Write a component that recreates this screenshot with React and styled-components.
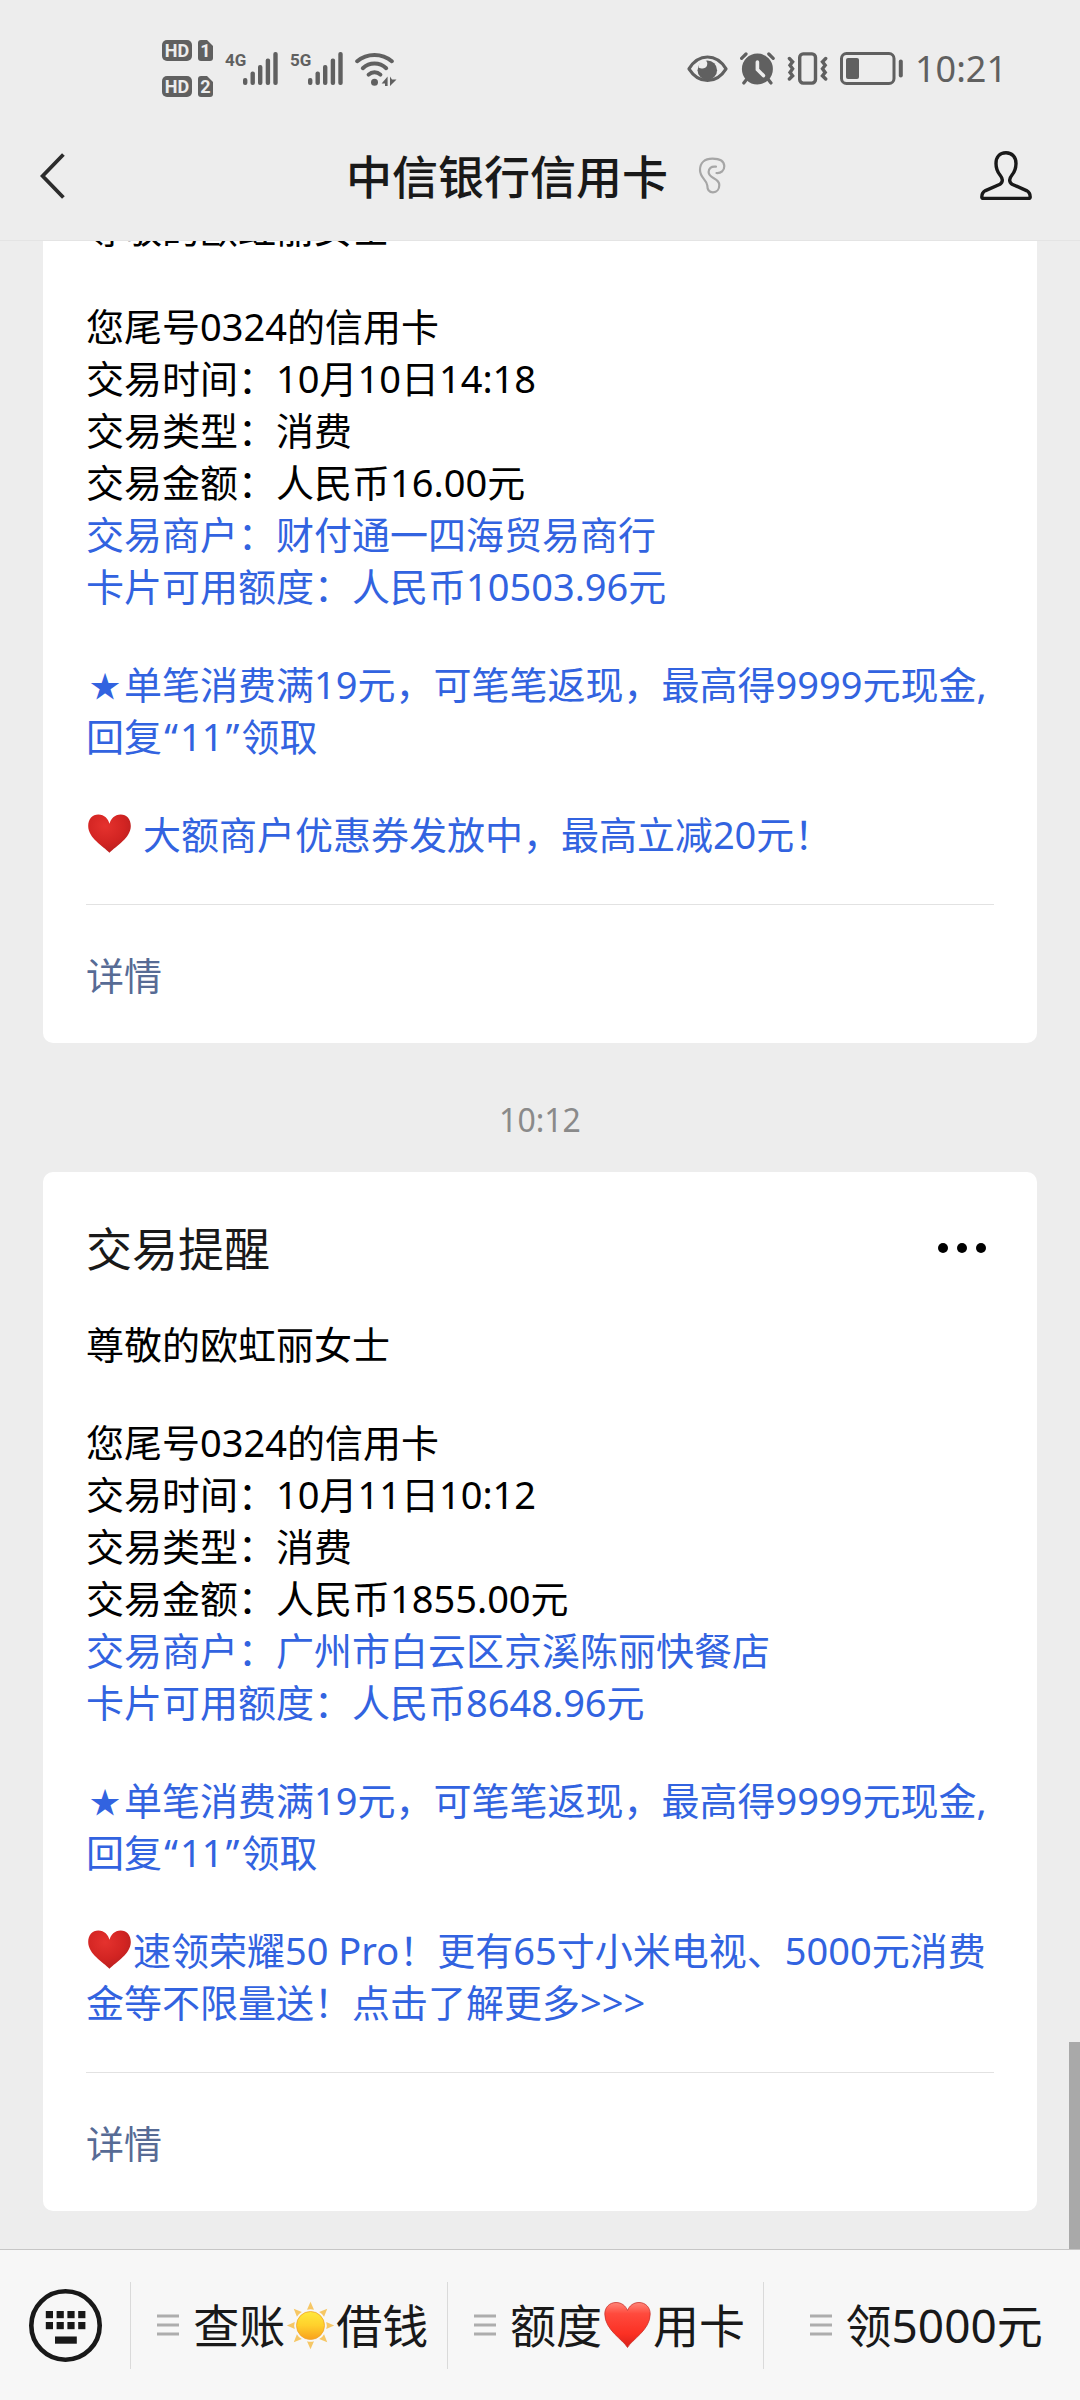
import React from "react";
import styled, { createGlobalStyle } from "styled-components";

const messages = [
  {
    id: 1,
    title: "交易提醒",
    greeting: "尊敬的欧虹丽女士",
    rows: [
      { text: "您尾号0324的信用卡" },
      { text: "交易时间：10月10日14:18" },
      { text: "交易类型：消费" },
      { text: "交易金额：人民币16.00元" },
      { text: "交易商户：财付通一四海贸易商行", blue: true },
      { text: "卡片可用额度：人民币10503.96元", blue: true },
    ],
    promo: " 大额商户优惠券发放中，最高立减20元！",
  },
  {
    id: 2,
    time: "10:12",
    title: "交易提醒",
    greeting: "尊敬的欧虹丽女士",
    rows: [
      { text: "您尾号0324的信用卡" },
      { text: "交易时间：10月11日10:12" },
      { text: "交易类型：消费" },
      { text: "交易金额：人民币1855.00元" },
      { text: "交易商户：广州市白云区京溪陈丽快餐店", blue: true },
      { text: "卡片可用额度：人民币8648.96元", blue: true },
    ],
    promo: "速领荣耀50 Pro！更有65寸小米电视、5000元消费金等不限量送！点击了解更多>>>",
  },
];

const bars = [
  { x: 0, y: 26 },
  { x: 7.5, y: 19.5 },
  { x: 15, y: 13 },
  { x: 22.7, y: 6.5 },
  { x: 30.3, y: 0 },
];

const Signal = ({ label }) => (
  <SignalBox>
    <SignalLabel>{label}</SignalLabel>
    <svg width="35" height="33" viewBox="0 0 35 33" fill="#606060">
      {bars.map((bar) => (
        <rect key={bar.x} x={bar.x} y={bar.y} width="4.4" height={33 - bar.y} rx="2" />
      ))}
    </svg>
  </SignalBox>
);

const WifiIcon = () => (
  <svg width="42" height="34" viewBox="0 0 42 34" fill="none" stroke="#606060" strokeWidth="4" strokeLinecap="round">
    <path d="M2.2 9.2C12 .8 27 .8 36.8 9.2" />
    <path d="M7.8 16.2C14.5 10 24.5 10 31.2 16.2" />
    <path d="M13.6 22.6C17 19.4 22 19.4 25.4 22.6" />
    <circle cx="19.5" cy="30.2" r="3.5" fill="#606060" stroke="none" />
    <path d="M26.6 31.5L32.6 24.5V34H30V31.5ZM35 34V24.5L37 27.4H41.5L38 31Z" fill="#606060" stroke="none" />
  </svg>
);

const EyeIcon = () => (
  <svg width="41" height="28" viewBox="0 0 42 28" fill="none">
    <path d="M2 13.8C12-2.3 30-2.3 40 13.8C30 29.7 12 29.7 2 13.8Z" stroke="#606060" strokeWidth="3.2" strokeLinejoin="round" />
    <circle cx="20.8" cy="15.2" r="10" fill="#606060" />
    <path d="M12 12.5C14.5 14 19 14.5 20.5 10.5C21.3 8 20.5 6 18.5 4.6C14 5.4 11.8 8.5 12 12.5Z" fill="#ededed" />
  </svg>
);

const AlarmIcon = () => (
  <svg width="35" height="33" viewBox="0 0 35 33" fill="none" stroke="#606060" strokeWidth="3.2" strokeLinecap="round">
    <circle cx="17.4" cy="17" r="15.5" fill="#606060" stroke="none" />
    <path d="M0 10.5L9.5 1M34.8 10.5L25.3 1" stroke="#ededed" strokeWidth="2.4" />
    <path d="M1.6 6.4L6 2M33.2 6.4L28.8 2M6.5 27.5L3.8 31M28.3 27.5L31 31" />
    <path d="M17.4 10V17.5L23.4 23.6" stroke="#ededed" strokeWidth="3.6" />
  </svg>
);

const VibrateIcon = () => (
  <svg width="41" height="33" viewBox="0 0 41 33" fill="none" stroke="#606060" strokeWidth="3.4" strokeLinecap="round">
    <rect x="12.7" y="1.9" width="15.8" height="29.2" rx="3.5" />
    <path d="M2.4 6.5L5.6 9.8L3 13.2L5.6 16.8L3 20.4L5.6 23.8L2.4 27" />
    <path d="M38.7 6.5L35.5 9.8L38.2 13.2L35.5 16.8L38.2 20.4L35.5 23.8L38.7 27" />
  </svg>
);

const BatteryIcon = () => (
  <svg width="63" height="33" viewBox="0 0 63 33" fill="#606060">
    <rect x="1.5" y="1.5" width="52.5" height="30" rx="5" fill="none" stroke="#606060" strokeWidth="3" />
    <rect x="6" y="6" width="13" height="21" rx="2" />
    <rect x="58.8" y="7.5" width="4" height="18" rx="2" />
  </svg>
);

const BackIcon = () => (
  <svg width="26" height="46" viewBox="0 0 26 46" fill="none" stroke="#2c2c2c" strokeWidth="3.8">
    <path d="M23.4 1.5L2.6 23L23.4 44.5" />
  </svg>
);

const EarIcon = () => (
  <svg width="42" height="42" viewBox="0 0 42 42" fill="none" stroke="#a6a6a6" strokeWidth="2.2" strokeLinecap="round">
    <path d="M24.5 18C29 18.4 32.4 15.5 32.3 11C32 6.5 28 3.7 20.5 3.7C12.5 3.7 8 8 8 15C8 23 15 25 15.3 30.5C15.3 35 17.5 37.3 21 37.3C25 37.3 27.3 34 27.3 30C27.3 22.5 16.6 24 16.6 17C16.6 13.5 19 11 24 11.7" />
  </svg>
);

const UserIcon = () => (
  <svg width="52" height="50" viewBox="0 0 52 50" fill="none" stroke="#191919" strokeWidth="3.4" strokeLinejoin="round">
    <path d="M26 1.8C19.5 1.8 16 6.5 16 12.5C16 17 17.5 21 20 24C22.6 27.2 23.5 31 20 33.2L5.5 39.6C2.4 41.2 1.8 43.4 1.8 46Q1.8 47.4 3.4 47.4H48.6Q50.2 47.4 50.2 46C50.2 43.4 49.6 41.2 46.5 39.6L32 33.2C28.5 31 29.4 27.2 32 24C34.5 21 36 17 36 12.5C36 6.5 32.5 1.8 26 1.8Z" />
  </svg>
);

const KeyboardIcon = () => (
  <svg width="73" height="73" viewBox="0 0 73 73" fill="#191919">
    <circle cx="36.5" cy="36.5" r="34.2" fill="none" stroke="#191919" strokeWidth="4.6" />
    {[22, 33].map((y) =>
      [16.8, 27.6, 38.4, 49.2].map((x) => <rect key={`${x}-${y}`} x={x} y={y} width="7.2" height="7.2" />)
    )}
    <rect x="26" y="47.5" width="21.8" height="7.2" />
  </svg>
);

const MenuIcon = () => (
  <svg width="22" height="22" viewBox="0 0 22 22" fill="#adadad">
    <rect y="0.5" width="22" height="3" />
    <rect y="9.5" width="22" height="3" />
    <rect y="18.5" width="22" height="3" />
  </svg>
);

const SunIcon = () => (
  <svg width="51" height="51" viewBox="0 0 51 51">
    <defs>
      <linearGradient id="sun" x1="0" y1="0" x2="0" y2="1">
        <stop offset="0" stopColor="#ffe93b" />
        <stop offset="0.5" stopColor="#ffd02c" />
        <stop offset="1" stopColor="#f9a11c" />
      </linearGradient>
    </defs>
    {[0, 45, 90, 135, 180, 225, 270, 315].map((deg) => (
      <path key={deg} d="M25.5 1.8L29 9.8Q25.5 8.6 22 9.8Z" fill="#f6c765" transform={`rotate(${deg} 25.5 25.5)`} />
    ))}
    <circle cx="25.5" cy="25.5" r="14" fill="url(#sun)" stroke="#f0a52c" strokeWidth="0.8" />
  </svg>
);

const HeartIcon = () => (
  <svg width="51" height="48" viewBox="0 0 51 48">
    <defs>
      <linearGradient id="heart" x1="0" y1="0" x2="0" y2="1">
        <stop offset="0" stopColor="#ff8578" />
        <stop offset="0.25" stopColor="#ff4a3d" />
        <stop offset="0.7" stopColor="#fb3023" />
        <stop offset="1" stopColor="#d9201a" />
      </linearGradient>
    </defs>
    <path
      d="M25.5 46.5C21 38.5 2.8 29 2.8 13C2.8 6 7.8 1.5 14 1.5C19.5 1.5 23.5 4.6 25.5 9.5C27.5 4.6 31.5 1.5 37 1.5C43.2 1.5 48.2 6 48.2 13C48.2 29 30 38.5 25.5 46.5Z"
      fill="url(#heart)"
      stroke="#c9322b"
      strokeWidth="0.8"
    />
  </svg>
);

const CardHeart = () => (
  <InlineHeart width="47" height="39" viewBox="0 0 47 39">
    <defs>
      <radialGradient id="cardHeart" cx="0.4" cy="0.3" r="0.75">
        <stop offset="0" stopColor="#e5322e" />
        <stop offset="0.6" stopColor="#d22422" />
        <stop offset="1" stopColor="#b51f1f" />
      </radialGradient>
    </defs>
    <path
      d="M23.5 38.8C17 32 2.2 24 2.2 12C2.2 5 6.5 .6 12.3 .6C18.5 .6 22.2 5 23.5 9.8C24.8 5 28.5 .6 34.7 .6C40.5 .6 44.8 5 44.8 12C44.8 24 30 32 23.5 38.8Z"
      fill="url(#cardHeart)"
    />
  </InlineHeart>
);

const MessageCard = ({ message }) => {
  return (
    <Card>
      <CardHead>
        <CardTitle>{message.title}</CardTitle>
        <MoreBtn aria-label="更多">
          <Dot />
          <Dot />
          <Dot />
        </MoreBtn>
      </CardHead>
      <Detail>
        <p>{message.greeting}</p>
        <div>
          {message.rows.map((row) => (
            <Row key={row.text} $blue={row.blue}>{row.text}</Row>
          ))}
        </div>
        <Row $blue>
          <Star>★</Star>单笔消费满19元，可笔笔返现，最高得9999元现金,回复<Quote>“</Quote>11<Quote>”</Quote>领取
        </Row>
        <Row $blue>
          <CardHeart />
          {message.promo}
        </Row>
      </Detail>
      <CardFoot>
        <DetailLink href="#detail">详情</DetailLink>
      </CardFoot>
    </Card>
  );
};

const App = () => {
  return (
    <Phone lang="zh-CN">
      <GlobalStyle />
      <Header>
        <StatusBar>
          <StatusGroup>
            <SimList>
              {["1", "2"].map((num) => (
                <SimRow key={num}>
                  <HdBadge>HD</HdBadge>
                  <SimBadge>{num}</SimBadge>
                </SimRow>
              ))}
            </SimList>
            <Signal label="4G" />
            <Signal label="5G" />
            <WifiIcon />
          </StatusGroup>
          <StatusGroup>
            <EyeIcon />
            <AlarmIcon />
            <VibrateIcon />
            <BatteryIcon />
            <Clock>10:21</Clock>
          </StatusGroup>
        </StatusBar>
        <NavBar>
          <IconBtn aria-label="返回">
            <BackIcon />
          </IconBtn>
          <NavTitle>
            <h1>中信银行信用卡</h1>
            <EarIcon />
          </NavTitle>
          <IconBtn $right aria-label="公众号资料">
            <UserIcon />
          </IconBtn>
        </NavBar>
      </Header>
      <ChatArea>
        <ChatScroll>
          <ChatList>
            {messages.map((message) => (
              <React.Fragment key={message.id}>
                {message.time && <TimeLabel>{message.time}</TimeLabel>}
                <MessageCard message={message} />
              </React.Fragment>
            ))}
          </ChatList>
        </ChatScroll>
        <ScrollThumb />
      </ChatArea>
      <MenuBar>
        <KeyboardBtn aria-label="键盘">
          <KeyboardIcon />
        </KeyboardBtn>
        <MenuBtn>
          <MenuIcon />
          <MenuText>查账<SunIcon />借钱</MenuText>
        </MenuBtn>
        <MenuBtn>
          <MenuIcon />
          <MenuText>额度<HeartIcon />用卡</MenuText>
        </MenuBtn>
        <MenuBtn>
          <MenuIcon />
          <MenuText>领5000元</MenuText>
        </MenuBtn>
      </MenuBar>
    </Phone>
  );
};

const GlobalStyle = createGlobalStyle`
  * {
    box-sizing: border-box;
  }
  body {
    margin: 0;
    background-color: #ededed;
    font-family: "Noto Sans", "Noto Sans CJK SC", sans-serif;
  }
  h1, h2, p {
    margin: 0;
    font-weight: 400;
  }
  button {
    border: none;
    padding: 0;
    background: none;
    font-family: inherit;
    color: inherit;
    cursor: pointer;
  }
  svg {
    flex-shrink: 0;
  }
`;

const Phone = styled.div`
  display: flex;
  flex-direction: column;
  height: 100vh;
  background-color: #ededed;
`;

const Header = styled.header`
  padding-top: 26px;
  border-bottom: 1px solid #e4e4e4;
`;

const StatusBar = styled.div`
  display: flex;
  align-items: center;
  justify-content: space-between;
  height: 85px;
  padding: 0 73px 0 162px;
  color: #606060;
`;

const StatusGroup = styled.div`
  display: flex;
  align-items: center;
  gap: 12px;
`;

const SimList = styled.div`
  display: flex;
  flex-direction: column;
  gap: 15px;
`;

const SimRow = styled.div`
  display: flex;
  gap: 6px;
`;

const HdBadge = styled.span`
  width: 30px;
  height: 21px;
  border-radius: 5px;
  background-color: #606060;
  color: #ededed;
  font-family: Roboto, sans-serif;
  font-size: 18px;
  font-weight: 700;
  line-height: 21px;
  text-align: center;
`;

const SimBadge = styled(HdBadge)`
  width: 15px;
  border-radius: 3px;
  clip-path: polygon(0 0, 60% 0, 100% 28%, 100% 100%, 0 100%);
`;

const SignalBox = styled.div`
  display: flex;
`;

const SignalLabel = styled.span`
  width: 18px;
  font-family: "Liberation Sans Narrow", Roboto, sans-serif;
  font-size: 17px;
  font-weight: 700;
  line-height: 16px;
`;

const Clock = styled.span`
  font-size: 36px;
  line-height: 40px;
`;

const NavBar = styled.nav`
  display: flex;
  align-items: center;
  justify-content: space-between;
  height: 129px;
  padding: 0 40px;
  color: #191919;
`;

const IconBtn = styled.button`
  display: flex;
  flex: 1;
  justify-content: ${(props) => (props.$right ? "flex-end" : "flex-start")};
  padding-right: 8px;
`;

const NavTitle = styled.div`
  display: flex;
  align-items: center;
  gap: 24px;
  & h1 {
    font-size: 46px;
    font-weight: 500;
    line-height: 60px;
  }
`;

const ChatArea = styled.main`
  position: relative;
  flex: 1;
  min-height: 0;
`;

/* column-reverse keeps the newest message in view */
const ChatScroll = styled.div`
  display: flex;
  flex-direction: column-reverse;
  height: 100%;
  overflow-y: auto;
  scrollbar-width: none;
`;

const ChatList = styled.div`
  flex-shrink: 0;
  padding: 0 43px 38px;
`;

const ScrollThumb = styled.div`
  position: absolute;
  right: 0;
  bottom: 0;
  width: 11px;
  height: 207px;
  background-color: #a9a9a9;
`;

const TimeLabel = styled.p`
  padding: 57px 0 32px;
  color: #8a8a8a;
  font-size: 32px;
  line-height: 40px;
  text-align: center;
`;

const Card = styled.article`
  padding: 43px 43px 0;
  border-radius: 10px;
  background-color: #fff;
`;

const CardHead = styled.div`
  display: flex;
  align-items: center;
  justify-content: space-between;
  height: 66px;
  margin-bottom: 37px;
`;

const CardTitle = styled.h2`
  color: #191919;
  font-size: 46px;
  line-height: 60px;
`;

const MoreBtn = styled.button`
  display: flex;
  gap: 9px;
  padding: 8px;
`;

const Dot = styled.span`
  width: 10px;
  height: 10px;
  border-radius: 50%;
  background-color: #000;
`;

const Detail = styled.div`
  display: flex;
  flex-direction: column;
  gap: 46px;
  color: #000;
  font-size: 38px;
  line-height: 52px;
`;

const Row = styled.p`
  color: ${(props) => (props.$blue ? "#3263e0" : "#000")};
`;

const Star = styled.span`
  display: inline-block;
  width: 38px;
  font-size: 30px;
  line-height: 30px;
  text-align: center;
  vertical-align: 2px;
`;

const Quote = styled.span`
  display: inline-block;
  width: 18px;
  text-align: center;
`;

const InlineHeart = styled.svg`
  vertical-align: -4px;
`;

const CardFoot = styled.div`
  margin-top: 44px;
  padding: 44px 0 42px;
  border-top: 1px solid #e2e2e2;
  font-size: 38px;
  line-height: 52px;
`;

const DetailLink = styled.a`
  color: #576b95;
  text-decoration: none;
`;

const MenuBar = styled.footer`
  display: flex;
  align-items: center;
  height: 151px;
  border-top: 1px solid #c6c6c6;
  background-color: #f7f7f7;
  color: #191919;
`;

const KeyboardBtn = styled.button`
  display: flex;
  justify-content: center;
  width: 130px;
`;

const MenuBtn = styled.button`
  display: flex;
  flex: 1;
  align-items: center;
  justify-content: center;
  gap: 14px;
  height: 87px;
  padding-left: 8px;
  border-left: 1px solid #dadada;
`;

const MenuText = styled.span`
  display: flex;
  align-items: center;
  font-size: 46px;
  line-height: 60px;
  white-space: nowrap;
`;

export default App;
